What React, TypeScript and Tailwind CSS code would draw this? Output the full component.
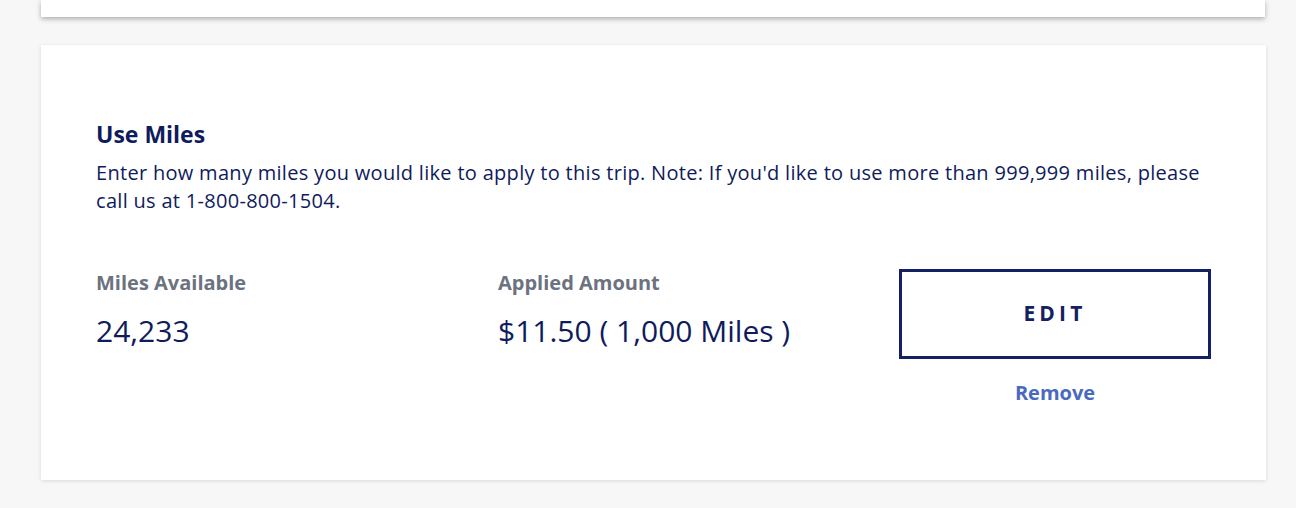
import React from "react";

const MilesCard: React.FC = () => {
  return (
    <div className="bg-white shadow-[0_1px_4px_rgba(0,0,0,0.12)] h-[435px] px-[55px] pt-[73px]">
      <h2 className="text-[23px] font-bold text-[#0f1b5c] leading-[32px]">Use Miles</h2>
      <p className="text-[20px] tracking-[0.3px] text-[#0f1b5c] leading-[28px] mt-[9px]">
        Enter how many miles you would like to apply to this trip. Note: If you'd like to use more than 999,999 miles, please call us at 1-800-800-1504.
      </p>

      <div className="grid grid-cols-[402px_401px_312px] mt-[54px]">
        <div>
          <div className="text-[20px] font-bold text-[#6b7280] leading-[28px]">Miles Available</div>
          <div className="text-[30px] text-[#0f1b5c] leading-[36px] mt-[16px]">24,233</div>
        </div>
        <div>
          <div className="text-[20px] font-bold text-[#6b7280] leading-[28px]">Applied Amount</div>
          <div className="text-[30px] text-[#0f1b5c] leading-[36px] mt-[16px]">$11.50 ( 1,000 Miles )</div>
        </div>
        <div className="flex flex-col items-center">
          <button className="w-full h-[90px] border-[3px] border-[#152062] text-[#152062] font-bold text-[21px] tracking-[0.2em] cursor-pointer">
            EDIT
          </button>
          <a className="text-[20px] font-bold text-[#4a6ac0] mt-[20px] leading-[28px] cursor-pointer">Remove</a>
        </div>
      </div>
    </div>
  );
};

const App: React.FC = () => {
  return (
    <div className="min-h-[508px] bg-[#f7f7f7] px-[41px] pr-[30px] font-['Open_Sans',sans-serif]">
      <div className="bg-white h-[17px] shadow-[0_2px_5px_rgba(0,0,0,0.3)] mr-[1px]" />
      <div className="mt-[28px]">
        <MilesCard />
      </div>
    </div>
  );
};

export default App;
